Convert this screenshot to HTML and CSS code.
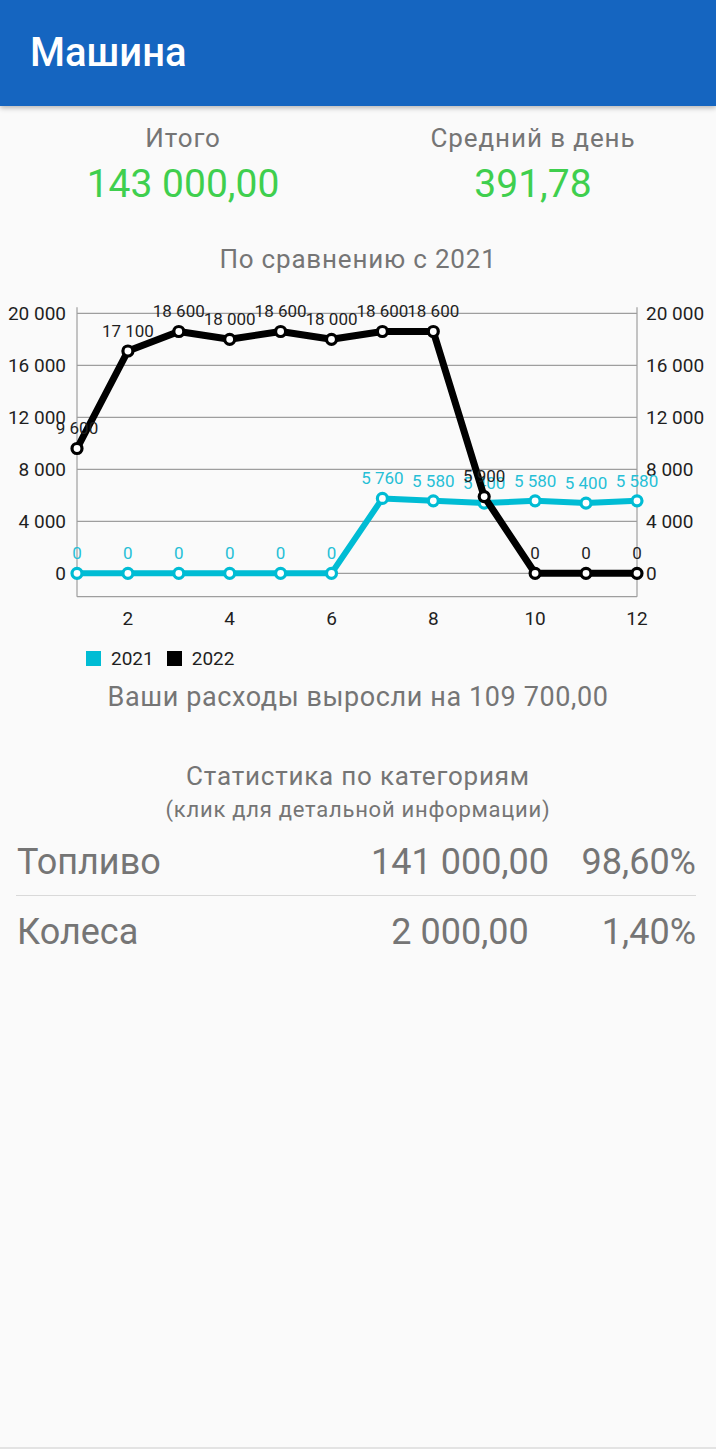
FILE: index.html
```html
<!DOCTYPE html>
<html lang="ru">
<head>
<meta charset="utf-8">
<title>Машина</title>
<link rel="stylesheet" href="styles.css">
</head>
<body>
<div class="page">
  <header class="appbar"><h1 class="appbar-title">Машина</h1></header>
  <main class="content">
    <section class="summary">
      <div class="stat">
        <div class="stat-label">Итого</div>
        <div class="stat-value">143 000,00</div>
      </div>
      <div class="stat">
        <div class="stat-label">Средний в день</div>
        <div class="stat-value">391,78</div>
      </div>
    </section>

    <div class="compare-title">По сравнению с 2021</div>

    <svg class="chart" width="716" height="340" viewBox="0 0 716 340">
      <g class="grid">
        <line x1="77" y1="23.3" x2="637" y2="23.3"/>
        <line x1="77" y1="75.3" x2="637" y2="75.3"/>
        <line x1="77" y1="127.3" x2="637" y2="127.3"/>
        <line x1="77" y1="179.3" x2="637" y2="179.3"/>
        <line x1="77" y1="231.3" x2="637" y2="231.3"/>
        <line x1="77" y1="283.3" x2="637" y2="283.3"/>
        <line x1="77" y1="17.3" x2="77" y2="306.7"/>
        <line x1="637" y1="17.3" x2="637" y2="306.7"/>
        <line x1="77" y1="306.7" x2="637" y2="306.7"/>
      </g>
      <g class="axis-label axis-left">
        <text x="66" y="30">20 000</text>
        <text x="66" y="82">16 000</text>
        <text x="66" y="134">12 000</text>
        <text x="66" y="186">8 000</text>
        <text x="66" y="238">4 000</text>
        <text x="66" y="290">0</text>
      </g>
      <g class="axis-label axis-right">
        <text x="646" y="30">20 000</text>
        <text x="646" y="82">16 000</text>
        <text x="646" y="134">12 000</text>
        <text x="646" y="186">8 000</text>
        <text x="646" y="238">4 000</text>
        <text x="646" y="290">0</text>
      </g>
      <g class="axis-label axis-x">
        <text x="127.9" y="334.7">2</text>
        <text x="229.7" y="334.7">4</text>
        <text x="331.5" y="334.7">6</text>
        <text x="433.3" y="334.7">8</text>
        <text x="535.1" y="334.7">10</text>
        <text x="637" y="334.7">12</text>
      </g>

      <g class="series series-2021">
        <polyline class="series-line" points="77,283.3 127.9,283.3 178.8,283.3 229.7,283.3 280.6,283.3 331.5,283.3 382.4,208.4 433.3,210.8 484.2,213.1 535.1,210.8 586,213.1 637,210.8"/>
        <g class="series-dots">
          <circle cx="77" cy="283.3" r="5"/>
          <circle cx="127.9" cy="283.3" r="5"/>
          <circle cx="178.8" cy="283.3" r="5"/>
          <circle cx="229.7" cy="283.3" r="5"/>
          <circle cx="280.6" cy="283.3" r="5"/>
          <circle cx="331.5" cy="283.3" r="5"/>
          <circle cx="382.4" cy="208.4" r="5"/>
          <circle cx="433.3" cy="210.8" r="5"/>
          <circle cx="484.2" cy="213.1" r="5"/>
          <circle cx="535.1" cy="210.8" r="5"/>
          <circle cx="586" cy="213.1" r="5"/>
          <circle cx="637" cy="210.8" r="5"/>
        </g>
        <g class="value-label">
          <text x="77" y="269.1">0</text>
          <text x="127.9" y="269.1">0</text>
          <text x="178.8" y="269.1">0</text>
          <text x="229.7" y="269.1">0</text>
          <text x="280.6" y="269.1">0</text>
          <text x="331.5" y="269.1">0</text>
          <text x="382.4" y="194.2">5 760</text>
          <text x="433.3" y="196.6">5 580</text>
          <text x="484.2" y="198.9">5 400</text>
          <text x="535.1" y="196.6">5 580</text>
          <text x="586" y="198.9">5 400</text>
          <text x="637" y="196.6">5 580</text>
        </g>
      </g>

      <g class="series series-2022">
        <polyline class="series-line" points="77,158.5 127.9,61 178.8,41.5 229.7,49.3 280.6,41.5 331.5,49.3 382.4,41.5 433.3,41.5 484.2,206.6 535.1,283.3 586,283.3 637,283.3"/>
        <g class="series-dots">
          <circle cx="77" cy="158.5" r="5"/>
          <circle cx="127.9" cy="61" r="5"/>
          <circle cx="178.8" cy="41.5" r="5"/>
          <circle cx="229.7" cy="49.3" r="5"/>
          <circle cx="280.6" cy="41.5" r="5"/>
          <circle cx="331.5" cy="49.3" r="5"/>
          <circle cx="382.4" cy="41.5" r="5"/>
          <circle cx="433.3" cy="41.5" r="5"/>
          <circle cx="484.2" cy="206.6" r="5"/>
          <circle cx="535.1" cy="283.3" r="5"/>
          <circle cx="586" cy="283.3" r="5"/>
          <circle cx="637" cy="283.3" r="5"/>
        </g>
        <g class="value-label">
          <text x="77" y="144.3">9 600</text>
          <text x="127.9" y="46.8">17 100</text>
          <text x="178.8" y="27.3">18 600</text>
          <text x="229.7" y="35.1">18 000</text>
          <text x="280.6" y="27.3">18 600</text>
          <text x="331.5" y="35.1">18 000</text>
          <text x="382.4" y="27.3">18 600</text>
          <text x="433.3" y="27.3">18 600</text>
          <text x="484.2" y="192.4">5 900</text>
          <text x="535.1" y="269.1">0</text>
          <text x="586" y="269.1">0</text>
          <text x="637" y="269.1">0</text>
        </g>
      </g>
    </svg>

    <div class="legend">
      <span class="legend-item"><span class="legend-swatch swatch-2021"></span>2021</span>
      <span class="legend-item"><span class="legend-swatch swatch-2022"></span>2022</span>
    </div>

    <div class="delta">Ваши расходы выросли на 109 700,00</div>

    <div class="cat-title">Статистика по категориям</div>
    <div class="cat-hint">(клик для детальной информации)</div>

    <ul class="cat-list">
      <li class="cat-row">
        <span class="cat-name">Топливо</span>
        <span class="cat-amount">141 000,00</span>
        <span class="cat-pct">98,60%</span>
      </li>
      <li class="cat-row">
        <span class="cat-name">Колеса</span>
        <span class="cat-amount">2 000,00</span>
        <span class="cat-pct">1,40%</span>
      </li>
    </ul>
  </main>
  <div class="bottom-edge"></div>
</div>
</body>
</html>
```

FILE: styles.css
```css
* { box-sizing: border-box; }

html, body {
  margin: 0;
  padding: 0;
  background: #fafafa;
  font-family: Roboto, "Noto Sans", "Liberation Sans", sans-serif;
}

.page {
  min-height: 1449px;
  display: flex;
  flex-direction: column;
}

.appbar {
  height: 106px;
  background: #1565c0;
  display: flex;
  align-items: center;
  padding-left: 30px;
  box-shadow: 0 2px 5px rgba(0, 0, 0, 0.28);
  position: relative;
  z-index: 1;
}

.appbar-title {
  margin: 0;
  color: #ffffff;
  font-size: 40px;
  font-weight: 500;
  line-height: 46px;
}

.content {
  flex: 1;
  color: #757575;
}

.summary {
  display: grid;
  grid-template-columns: 1fr 1fr;
  padding: 16px 8px 0;
}

.stat {
  text-align: center;
}

.stat-label {
  font-size: 26px;
  line-height: 32px;
  letter-spacing: 0.9px;
  color: #757575;
}

.stat-value {
  margin-top: 6px;
  font-size: 39px;
  line-height: 48px;
  color: #3fcf4e;
}

.compare-title {
  margin-top: 36px;
  text-align: center;
  font-size: 26px;
  line-height: 30px;
  letter-spacing: 0.8px;
}

.chart {
  display: block;
  margin-top: 16px;
}

.grid line {
  stroke: #9e9e9e;
  stroke-width: 1.2;
}

.axis-label text {
  font-family: Roboto, "Noto Sans", sans-serif;
  font-size: 19px;
  fill: #1f1f1f;
}

.axis-left text { text-anchor: end; }
.axis-right text { text-anchor: start; }
.axis-x text { text-anchor: middle; }

.series-line {
  fill: none;
  stroke-width: 6;
  stroke-linejoin: round;
  stroke-linecap: round;
}

.series-2022 .series-line { stroke-width: 7; }

.series-dots circle {
  fill: #ffffff;
  stroke-width: 3.2;
}

.value-label text {
  font-family: Roboto, "Noto Sans", sans-serif;
  font-size: 17px;
  text-anchor: middle;
}

.series-2021 .series-line,
.series-2021 .series-dots circle { stroke: #00bcd4; }
.series-2021 .value-label text { fill: #26bfd6; }

.series-2022 .series-line,
.series-2022 .series-dots circle { stroke: #000000; }
.series-2022 .value-label text { fill: #1f1f1f; }

.legend {
  margin-top: 16px;
  padding-left: 86px;
  display: flex;
  align-items: center;
  gap: 13px;
  height: 24px;
  font-size: 19px;
  color: #1f1f1f;
}

.legend-item {
  display: flex;
  align-items: center;
  gap: 10px;
}

.legend-swatch {
  width: 15px;
  height: 15px;
  display: inline-block;
}

.swatch-2021 { background: #00bcd4; }
.swatch-2022 { background: #000000; }

.delta {
  margin-top: 10px;
  text-align: center;
  font-size: 27px;
  line-height: 34px;
  letter-spacing: 0.6px;
}

.cat-title {
  margin-top: 46px;
  text-align: center;
  font-size: 26px;
  line-height: 32px;
  letter-spacing: 0.8px;
}

.cat-hint {
  margin-top: 4px;
  text-align: center;
  font-size: 22px;
  line-height: 28px;
  letter-spacing: 0.75px;
}

.cat-list {
  list-style: none;
  margin: 2px 20px 0 16px;
  padding: 0;
}

.cat-row {
  display: grid;
  grid-template-columns: 1fr 200px 136px;
  align-items: baseline;
  padding: 14px 0 11px;
  font-size: 36px;
  line-height: 44px;
  color: #757575;
}

.cat-row + .cat-row {
  border-top: 1.5px solid #d9d9d9;
}

.cat-name { padding-left: 1px; }
.cat-amount { text-align: center; }
.cat-pct { text-align: right; }

.bottom-edge {
  height: 2px;
  background: #e3e3e3;
}
```
